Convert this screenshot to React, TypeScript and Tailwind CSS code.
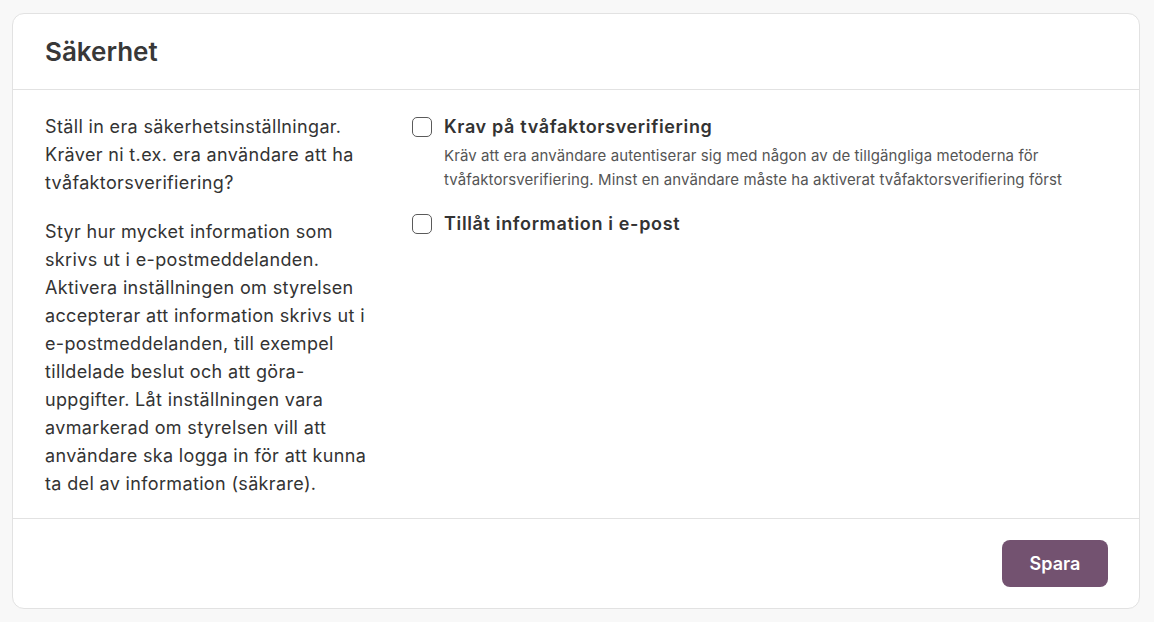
import React from "react";

function Checkbox({ label, children }: { label: string; children?: React.ReactNode }) {
  return (
    <div className="flex gap-3">
      <input
        type="checkbox"
        className="mt-[2px] h-5 w-5 shrink-0 appearance-none rounded-[5px] border border-[#5a5a5a] bg-white"
      />
      <div>
        <div className="text-[18px] font-semibold leading-[24px] tracking-[0.65px] text-[#333333]">
          {label}
        </div>
        {children}
      </div>
    </div>
  );
}

export default function App() {
  return (
    <div
      className="min-h-[622px] bg-[#f8f8f8] pt-[13px] pr-[14px] pb-[13px] pl-3"
      style={{ fontFamily: "Inter, 'Noto Sans', sans-serif" }}
    >
      <div className="overflow-hidden rounded-[12px] border border-[#e2e2e2] bg-white">
        <div className="flex h-[76px] items-center border-b border-[#e2e2e2] px-8">
          <h1 className="text-[26px] font-semibold text-[#383838]">Säkerhet</h1>
        </div>
        <div className="flex gap-[34px] px-8 pt-[23px] pb-[20px]">
          <div className="w-[333px] shrink-0 text-[18px] leading-[28px] tracking-[0.35px] text-[#333333]">
            <p>
              Ställ in era säkerhetsinställningar. Kräver ni t.ex. era användare att ha
              tvåfaktorsverifiering?
            </p>
            <p className="mt-[21px]">
              Styr hur mycket information som skrivs ut i e-postmeddelanden. Aktivera
              inställningen om styrelsen accepterar att information skrivs ut i
              e-postmeddelanden, till exempel tilldelade beslut och att göra-uppgifter. Låt
              inställningen vara avmarkerad om styrelsen vill att användare ska logga in för
              att kunna ta del av information (säkrare).
            </p>
          </div>
          <div className="flex flex-1 flex-col gap-[20px] pt-[2px]">
            <Checkbox label="Krav på tvåfaktorsverifiering">
              <p className="mt-[5px] text-[15px] leading-[24px] tracking-[0.1px] text-[#555555]">
                Kräv att era användare autentiserar sig med någon av de tillgängliga metoderna
                för tvåfaktorsverifiering. Minst en användare måste ha aktiverat
                tvåfaktorsverifiering först
              </p>
            </Checkbox>
            <Checkbox label="Tillåt information i e-post" />
          </div>
        </div>
        <div className="flex justify-end border-t border-[#e2e2e2] pt-[21px] pr-[31px] pb-[21px] pl-8">
          <button className="h-[47px] w-[106px] rounded-[8px] bg-[#735270] text-[18px] font-semibold text-white">
            Spara
          </button>
        </div>
      </div>
    </div>
  );
}
